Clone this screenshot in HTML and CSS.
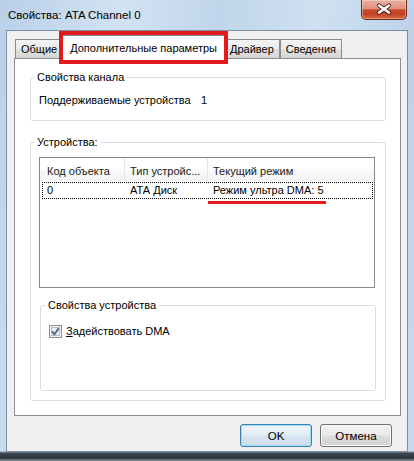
FILE: index.html
```html
<!DOCTYPE html>
<html lang="ru">
<head>
<meta charset="utf-8">
<title>Свойства: ATA Channel 0</title>
<link rel="stylesheet" href="styles.css">
</head>
<body>
<div class="window">
  <div class="titlebar">
    <span class="title">Свойства: ATA Channel 0</span>
    <div class="close">
      <svg width="46" height="20" viewBox="0 0 46 20">
        <path d="M18 6.5 L28 13.5 M28 6.5 L18 13.5" stroke="#5a2418" stroke-width="4.2" stroke-linecap="round" fill="none"/>
        <path d="M18 6.5 L28 13.5 M28 6.5 L18 13.5" stroke="#ffffff" stroke-width="2.4" stroke-linecap="round" fill="none"/>
      </svg>
    </div>
  </div>
  <div class="client">
    <div class="tabs">
      <div class="tab">Общие</div>
      <div class="tab active">Дополнительные параметры<span class="mark"></span></div>
      <div class="tab">Драйвер</div>
      <div class="tab">Сведения</div>
    </div>
    <div class="panel">
      <fieldset class="group g1">
        <legend>Свойства канала</legend>
        <div class="prop"><span class="prop-label">Поддерживаемые устройства</span><span>1</span></div>
      </fieldset>
      <fieldset class="group g2">
        <legend>Устройства:</legend>
        <div class="list">
          <div class="lhead">
            <div class="hcell">Код объекта</div>
            <div class="hcell">Тип устройс...</div>
            <div class="hcell last">Текущий режим</div>
          </div>
          <div class="lrow">
            <div class="cell c1">0</div>
            <div class="cell">АТА Диск</div>
            <div class="cell"><span class="hl">Режим ультра DMA: 5</span></div>
          </div>
        </div>
        <fieldset class="group g3">
          <legend>Свойства устройства</legend>
          <label class="check">
            <span class="box">
              <svg width="13" height="13" viewBox="0 0 13 13">
                <rect x="0.5" y="0.5" width="12" height="12" fill="#f4f4f4" stroke="#8e8f8f"/>
                <rect x="2.5" y="2.5" width="8" height="8" fill="#e9ecef" stroke="#b9bec4"/>
                <path d="M3.2 6.4 L5.4 9.2 L9.8 3.3" stroke="#4a5e8c" stroke-width="1.8" fill="none"/>
              </svg>
            </span>
            <span><u>З</u>адействовать DMA</span>
          </label>
        </fieldset>
      </fieldset>
    </div>
    <div class="buttons">
      <button class="btn default">OK</button>
      <button class="btn">Отмена</button>
    </div>
  </div>
</div>
</body>
</html>
```

FILE: styles.css
```css
* { box-sizing: border-box; }
html, body { margin: 0; padding: 0; }
body {
  width: 414px;
  height: 461px;
  overflow: hidden;
  font-family: "Liberation Sans", Arial, sans-serif;
  font-size: 11px;
  color: #000;
  background: #2f3843;
}
.window {
  width: 414px;
  height: 461px;
  display: flex;
  flex-direction: column;
  background:
    linear-gradient(180deg, rgba(255,255,255,0) 0px, rgba(255,255,255,0) 451px, #3e4955 453px, #2c343e 458px, #8c949d 461px),
    linear-gradient(100deg, #b9d0e9 0%, #d2e2f2 25%, #c0d5eb 45%, #cfe0f1 65%, #bdd2e9 85%, #c8daee 100%);
}
.titlebar {
  height: 30px;
  display: flex;
  align-items: flex-start;
  padding-left: 8px;
}
.title {
  font-size: 11.5px;
  line-height: 14px;
  margin-top: 8px;
}
.close {
  margin-left: auto;
  margin-right: 7px;
  width: 46px;
  height: 20px;
  border: 1px solid #6a2a1e;
  border-top: none;
  border-radius: 0 0 5px 5px;
  background: linear-gradient(180deg, #eab2a5 0%, #df907e 45%, #c8472c 52%, #c24528 75%, #d8683e 100%);
  box-shadow: inset 0 0 0 1px rgba(255,220,200,0.45);
  overflow: hidden;
}
.close svg { display: block; margin: -1px 0 0 -1px; }
.client {
  flex: 1;
  margin: 0 6px 9px 6px;
  border: 1px solid #7e8fa3;
  background: #f0f0f0;
  display: flex;
  flex-direction: column;
  padding: 0 6px 0 7px;
}
.tabs {
  display: flex;
  align-items: flex-end;
  height: 28px;
  padding: 4px 0 0 1px;
  position: relative;
  z-index: 2;
}
.tab {
  height: 19px;
  margin-bottom: 1px;
  padding: 0 5px;
  line-height: 18px;
  border: 1px solid #898c95;
  border-bottom: none;
  background: linear-gradient(180deg, #f3f3f3 0%, #ececec 50%, #e0e0e0 52%, #d6d6d6 100%);
  white-space: nowrap;
}
.tab.active {
  position: relative;
  z-index: 1;
  height: 24px;
  margin: 0 -2px;
  padding: 1px 8px 0 8px;
  line-height: 22px;
  background: #fff;
}
.mark {
  position: absolute;
  left: -3px;
  right: -3px;
  top: -5px;
  bottom: -5px;
  border: 4px solid #e21a1c;
  z-index: 5;
}
.panel {
  height: 358px;
  margin-top: -1px;
  border: 1px solid #898c95;
  background: #fff;
  padding: 11px 14px 14px 15px;
  display: flex;
  flex-direction: column;
}
.group {
  margin: 0;
  padding: 0;
  min-width: 0;
  border: 1px solid #d5dfe5;
  border-radius: 3px;
}
.group legend {
  margin-left: 3px;
  padding: 0 3px;
  line-height: 14px;
  height: 14px;
}
.prop {
  display: flex;
  padding: 9px 0 13px 8px;
  line-height: 14px;
}
.prop-label { min-width: 162px; }
.g2 {
  margin-top: 14px;
  flex: 1;
  padding-bottom: 9px;
}
.list {
  margin: 8px 0 0 8px;
  width: 336px;
  height: 131px;
  border: 1px solid #828790;
  background: #fff;
}
.lhead {
  display: grid;
  grid-template-columns: 85px 83px 1fr;
  height: 23px;
  background: linear-gradient(180deg, #ffffff 0%, #ffffff 45%, #f7f8fa 55%, #f1f2f4 100%);
}
.hcell {
  border-right: 1px solid #e2e6ea;
  padding: 6px 0 0 5px;
  line-height: 14px;
  color: #222;
  white-space: nowrap;
  overflow: hidden;
}
.hcell:first-child { padding-left: 7px; }
.hcell.last { border-right: none; }
.lrow {
  display: grid;
  grid-template-columns: 82px 83px 1fr;
  margin: 1px 1px 0 2px;
  height: 17px;
  border: 1px dotted #000;
  line-height: 15px;
}
.cell { padding-left: 5px; white-space: nowrap; }
.cell.c1 { padding-left: 4px; }
.hl { position: relative; }
.hl::after {
  content: "";
  position: absolute;
  left: -5px;
  right: -2px;
  top: 17px;
  height: 3px;
  background: #e21a1c;
}
.g3 {
  height: 93px;
  margin: 10px 0 0 9px;
  width: 336px;
}
.g3 legend { margin-left: 4px; }
.check {
  display: flex;
  align-items: center;
  margin: 13px 0 0 8px;
  line-height: 13px;
}
.box { width: 13px; height: 13px; margin-right: 4px; }
.box svg { display: block; }
.buttons {
  display: flex;
  justify-content: flex-end;
  gap: 8px;
  margin-top: 8px;
  padding-right: 9px;
}
.btn {
  width: 72px;
  height: 23px;
  padding: 0;
  font-family: "Liberation Sans", Arial, sans-serif;
  font-size: 11.5px;
  color: #000;
  border: 1px solid #707070;
  border-radius: 3px;
  background: linear-gradient(180deg, #f2f2f2 0%, #ebebeb 48%, #dddddd 52%, #cfcfcf 100%);
  box-shadow: inset 0 0 0 1px #fbfbfb;
}
.btn.default {
  border-color: #3c7fb1;
  background: linear-gradient(180deg, #eef5fa 0%, #e4eef5 48%, #d6e5f0 52%, #cddde9 100%);
  box-shadow: inset 0 0 0 1px #9fdcf5;
}
```
